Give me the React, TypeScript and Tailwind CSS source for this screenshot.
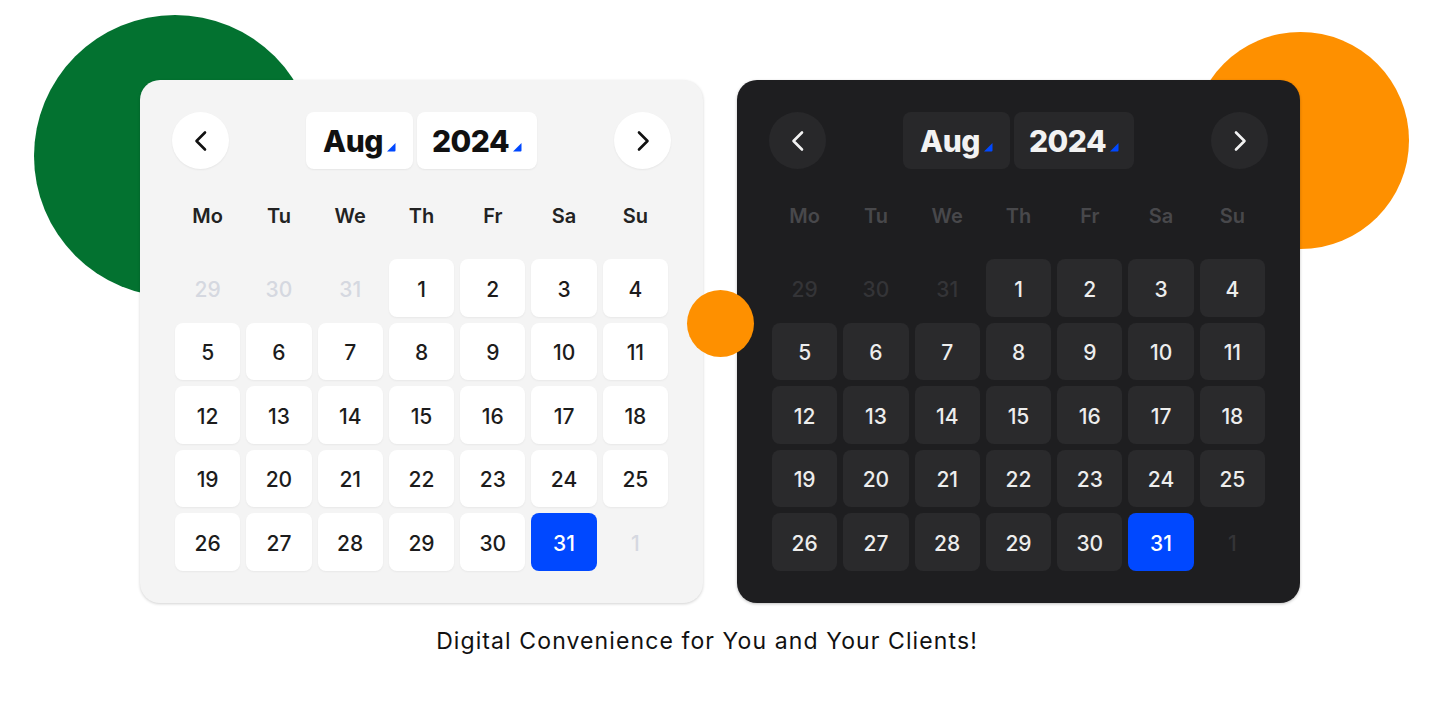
import React from 'react'

const weekDays = ['Mo', 'Tu', 'We', 'Th', 'Fr', 'Sa', 'Su']

type Day = { n: number; muted?: boolean; selected?: boolean }

function buildDays(): Day[] {
  const days: Day[] = [{ n: 29, muted: true }, { n: 30, muted: true }, { n: 31, muted: true }]
  for (let i = 1; i <= 31; i++) days.push({ n: i, selected: i === 31 })
  days.push({ n: 1, muted: true })
  return days
}

const theme = {
  light: {
    card: 'bg-[#f4f4f4] shadow-[0_1px_3px_rgba(0,0,0,0.18)]',
    btn: 'bg-white shadow-[0_1px_2px_rgba(0,0,0,0.06)] text-[#111]',
    head: 'text-[#222222]',
    cell: 'bg-white text-[#1c1c1c] shadow-[0_1px_2px_rgba(0,0,0,0.05)]',
    muted: 'text-[#d5d8e0]',
    chevron: '#111111',
  },
  dark: {
    card: 'bg-[#1e1e20] shadow-[0_1px_3px_rgba(0,0,0,0.25)]',
    btn: 'bg-[#28282a] text-[#f2f2f2]',
    head: 'text-[#48484b]',
    cell: 'bg-[#2a2a2c] text-[#ededed]',
    muted: 'text-[#343437]',
    chevron: '#f2f2f2',
  },
}

function Chevron({ dir, color }: { dir: 'left' | 'right'; color: string }) {
  return (
    <svg width="24" height="24" viewBox="0 0 24 24" fill="none">
      <path
        d={dir === 'left' ? 'M16 3.5 L7.5 12 L16 20.5' : 'M8 3.5 L16.5 12 L8 20.5'}
        stroke={color}
        strokeWidth="2.6"
        strokeLinecap="round"
        strokeLinejoin="round"
      />
    </svg>
  )
}

function Triangle() {
  return (
    <svg width="10" height="10" viewBox="0 0 10 10" className="mt-[12px]">
      <path d="M1 9.5 L9.5 1 L9.5 8.5 Q9.5 9.5 8.5 9.5 Z" fill="#0048ff" />
    </svg>
  )
}

function Calendar({ mode }: { mode: 'light' | 'dark' }) {
  const t = theme[mode]
  const days = buildDays()
  return (
    <div className={`relative w-[563px] h-[523px] rounded-[20px] px-8 pt-8 pb-8 ${t.card}`}>
      {/* Header */}
      <div className="flex items-center justify-between h-[57px]">
        <button className={`w-[57px] h-[57px] rounded-full flex items-center justify-center ${t.btn}`}>
          <Chevron dir="left" color={t.chevron} />
        </button>
        <div className="flex gap-1">
          <div className={`w-[107px] h-[57px] rounded-lg flex items-center justify-center gap-[3px] ${t.btn}`}>
            <span className="text-[30px] font-extrabold tracking-[-0.5px] mt-[2px]">Aug</span>
            <Triangle />
          </div>
          <div className={`w-[120px] h-[57px] rounded-lg flex items-center justify-center gap-[3px] ${t.btn}`}>
            <span className="text-[30px] font-extrabold tracking-[-0.5px] mt-[2px]">2024</span>
            <Triangle />
          </div>
        </div>
        <button className={`w-[57px] h-[57px] rounded-full flex items-center justify-center ${t.btn}`}>
          <Chevron dir="right" color={t.chevron} />
        </button>
      </div>

      {/* Week days */}
      <div className="grid grid-cols-7 gap-[6px] px-[3px] mt-[19px] h-[56px] items-center">
        {weekDays.map((d) => (
          <div key={d} className={`text-center text-[20px] font-semibold ${t.head}`}>
            {d}
          </div>
        ))}
      </div>

      {/* Days */}
      <div className="grid grid-cols-7 gap-[6px] px-[3px] mt-[15px] auto-rows-[57.5px]">
        {days.map((d, i) => {
          const cls = d.selected
            ? 'bg-[#0048ff] text-white'
            : d.muted
              ? t.muted
              : t.cell
          return (
            <div
              key={i}
              className={`rounded-lg flex items-center justify-center text-[21px] font-medium pt-[3px] ${cls}`}
            >
              {d.n}
            </div>
          )
        })}
      </div>
    </div>
  )
}

export default function App() {
  return (
    <div
      className="relative w-full h-[719px] bg-white overflow-hidden"
      style={{ fontFamily: 'Inter, "Noto Sans", sans-serif' }}
    >
      {/* decorative circles */}
      <div className="absolute left-[34px] top-[15px] w-[282px] h-[282px] rounded-full bg-[#037230]" />
      <div className="absolute left-[1192px] top-[32px] w-[217px] h-[217px] rounded-full bg-[#fe9000]" />

      <div className="relative flex flex-col items-center pt-[80px]">
        <div className="flex gap-[34px]">
          <Calendar mode="light" />
          <Calendar mode="dark" />
        </div>
        <p className="mt-[21px] -ml-[26px] text-[23px] text-[#111] tracking-[1.1px]">
          Digital Convenience for You and Your Clients!
        </p>
      </div>

      <div className="absolute left-[687px] top-[290px] w-[67px] h-[67px] rounded-full bg-[#fe9000]" />
    </div>
  )
}
